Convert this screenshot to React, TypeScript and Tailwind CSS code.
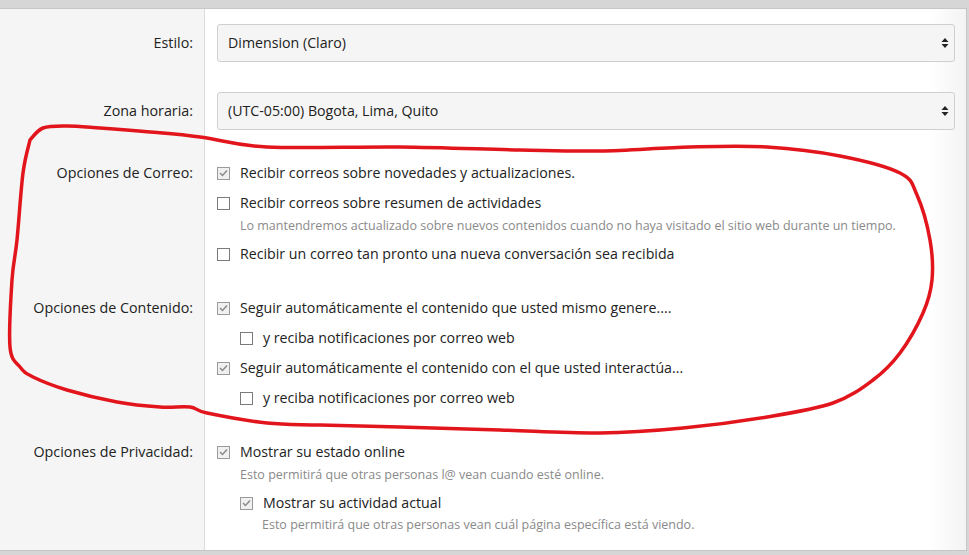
import React from 'react'

const font = { fontFamily: '"Open Sans", "Noto Sans", sans-serif' }

const loop: [number, number][] = [
  [30, 140], [43, 128], [67, 126], [100, 128], [150, 132], [200, 137], [267, 147], [400, 147],
  [520, 150], [600, 151], [690, 147], [767, 147], [840, 156], [900, 173], [917, 195], [930, 240],
  [932, 280], [923, 313], [900, 353], [873, 380], [833, 403], [767, 417], [683, 428], [600, 433],
  [500, 430], [400, 427], [320, 425], [267, 423], [207, 413], [190, 407], [160, 407], [117, 402],
  [67, 390], [33, 377], [20, 367], [10, 347], [12, 280], [17, 240], [23, 173], [30, 140],
]

function smoothPath(pts: [number, number][]) {
  let d = `M ${pts[0][0]} ${pts[0][1]}`
  for (let i = 0; i < pts.length - 1; i++) {
    const p0 = pts[i - 1] ?? pts[i]
    const p1 = pts[i]
    const p2 = pts[i + 1]
    const p3 = pts[i + 2] ?? p2
    const c1 = [p1[0] + (p2[0] - p0[0]) / 6, p1[1] + (p2[1] - p0[1]) / 6]
    const c2 = [p2[0] - (p3[0] - p1[0]) / 6, p2[1] - (p3[1] - p1[1]) / 6]
    d += ` C ${c1[0]} ${c1[1]} ${c2[0]} ${c2[1]} ${p2[0]} ${p2[1]}`
  }
  return d
}

function Box({ checked }: { checked?: boolean }) {
  return (
    <span
      className={
        'mr-[10px] flex h-[13px] w-[13px] shrink-0 items-center justify-center border ' +
        (checked ? 'border-[#9a9a9a] bg-[#f0f0f0]' : 'border-[#7a7a7a] bg-white')
      }
    >
      {checked && (
        <svg width="9" height="8" viewBox="0 0 9 8">
          <path d="M1 4 L3.5 6.5 L8 1.5" fill="none" stroke="#8a8a8a" strokeWidth="1.5" />
        </svg>
      )}
    </span>
  )
}

function Item({ text, checked, className = '' }: { text: string; checked?: boolean; className?: string }) {
  return (
    <div className={'flex h-5 items-center ' + className}>
      <Box checked={checked} />
      <span className="text-[14.2px] text-[#222]">{text}</span>
    </div>
  )
}

function Hint({ text, className = '' }: { text: string; className?: string }) {
  return <div className={'h-[18px] text-[12.5px] leading-[18px] text-[#8a8a8a] ' + className}>{text}</div>
}

function Select({ value }: { value: string }) {
  return (
    <div className="flex h-[38px] items-center justify-between rounded-[3px] border border-[#cfcfcf] bg-[#f5f5f5] pl-[10px] pr-[5px] text-[14.2px] text-[#222]">
      <span>{value}</span>
      <svg width="8" height="12" viewBox="0 0 8 12">
        <path d="M4 1 L7.5 5 L0.5 5 Z M4 11 L7.5 7 L0.5 7 Z" fill="#222" />
      </svg>
    </div>
  )
}

function Row({ label, children, className = '', labelClass = '' }: { label: string; children: React.ReactNode; className?: string; labelClass?: string }) {
  return (
    <div className={'grid grid-cols-[205px_1fr] ' + className}>
      <div className={'pr-[12px] text-right text-[14.3px] text-[#222] ' + labelClass}>{label}</div>
      <div className="pl-[12px] pr-[11px]">{children}</div>
    </div>
  )
}

export default function App() {
  return (
    <div className="relative h-[555px] w-[969px] overflow-hidden bg-[#d6d6d6]" style={font}>
      <div className="mt-[8px] w-[967px] border-t border-r border-b border-[#c6c6c6] bg-[linear-gradient(to_right,#f5f5f5_204px,#dcdcdc_204px,#dcdcdc_205px,#ffffff_205px,#ffffff_930px,#f3f3f3_966px)]">
        <Row label="Estilo:" className="pt-[15px]" labelClass="leading-[38px]">
          <Select value="Dimension (Claro)" />
        </Row>
        <Row label="Zona horaria:" className="pt-[30px]" labelClass="leading-[38px]">
          <Select value="(UTC-05:00) Bogota, Lima, Quito" />
        </Row>
        <Row label="Opciones de Correo:" className="pt-[33px] leading-5">
          <Item checked text="Recibir correos sobre novedades y actualizaciones." />
          <Item className="mt-[10px]" text="Recibir correos sobre resumen de actividades" />
          <Hint className="mt-[4px] pl-[23px]" text="Lo mantendremos actualizado sobre nuevos contenidos cuando no haya visitado el sitio web durante un tiempo." />
          <Item className="mt-[9px]" text="Recibir un correo tan pronto una nueva conversación sea recibida" />
        </Row>
        <Row label="Opciones de Contenido:" className="pt-[34px] leading-5">
          <Item checked text="Seguir automáticamente el contenido que usted mismo genere...." />
          <Item className="mt-[10px] pl-[23px]" text="y reciba notificaciones por correo web" />
          <Item checked className="mt-[10px]" text="Seguir automáticamente el contenido con el que usted interactúa..." />
          <Item className="mt-[10px] pl-[23px]" text="y reciba notificaciones por correo web" />
        </Row>
        <Row label="Opciones de Privacidad:" className="pt-[34px] pb-[16px] leading-5">
          <Item checked text="Mostrar su estado online" />
          <Hint className="mt-[4px] pl-[23px]" text="Esto permitirá que otras personas l@ vean cuando esté online." />
          <Item checked className="mt-[9px] pl-[23px]" text="Mostrar su actividad actual" />
          <Hint className="mt-[3px] pl-[45px]" text="Esto permitirá que otras personas vean cuál página específica está viendo." />
        </Row>
      </div>
      <svg className="pointer-events-none absolute left-0 top-0" width="969" height="555">
        <path d={smoothPath(loop)} fill="none" stroke="#e3151c" strokeWidth="3.5" strokeLinejoin="round" strokeLinecap="round" />
      </svg>
    </div>
  )
}
